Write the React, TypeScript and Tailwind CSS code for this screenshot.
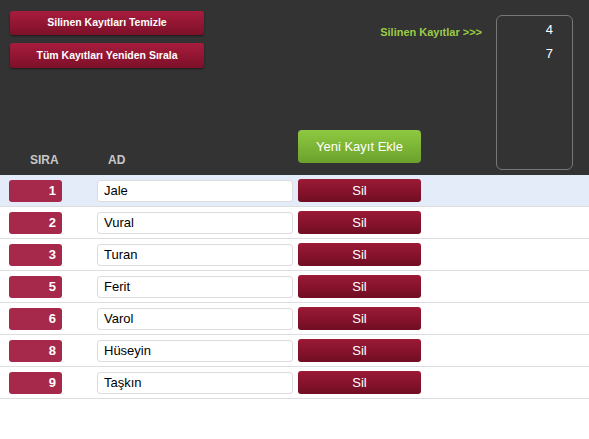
const ROWS = [
  { sira: 1, ad: "Jale" },
  { sira: 2, ad: "Vural" },
  { sira: 3, ad: "Turan" },
  { sira: 5, ad: "Ferit" },
  { sira: 6, ad: "Varol" },
  { sira: 8, ad: "Hüseyin" },
  { sira: 9, ad: "Taşkın" },
];

const DELETED = [4, 7];

export default function App() {
  return (
    <div className="w-[589px] h-[439px] bg-white font-['Liberation_Sans',Arial,sans-serif]">
      {/* ust panel */}
      <div className="h-[175px] bg-[#333333] flex">
        <div className="w-[298px] flex flex-col pt-[11px] pl-[10px]">
          <button className="w-[194px] h-[24px] rounded-[3px] bg-gradient-to-b from-[#a81c3d] to-[#7d1029] text-white text-[10.5px] font-bold shadow-[0_1px_2px_rgba(0,0,0,0.5)]">
            Silinen Kayıtları Temizle
          </button>
          <button className="mt-[8px] w-[194px] h-[25px] rounded-[3px] bg-gradient-to-b from-[#a81c3d] to-[#7d1029] text-white text-[10.5px] font-bold shadow-[0_1px_2px_rgba(0,0,0,0.5)]">
            Tüm Kayıtları Yeniden Sırala
          </button>
          <div className="mt-auto mb-[6px] flex text-[12px] font-bold text-[#c8c8c8]">
            <span className="w-[98px] pl-[20px]">SIRA</span>
            <span>AD</span>
          </div>
        </div>

        <div className="flex pt-[15px]">
          <div className="w-[198px] flex flex-col justify-between">
            <div className="mt-[9px] pr-[14px] text-right text-[11px] font-bold text-[#9ccc45]">
              Silinen Kayıtlar &gt;&gt;&gt;
            </div>
            <button className="mb-[12px] w-[123px] h-[33px] rounded-[4px] bg-gradient-to-b from-[#8fc940] to-[#6ba12c] text-white text-[13px]">
              Yeni Kayıt Ekle
            </button>
          </div>
          <div className="w-[77px] h-[155px] rounded-[6px] border border-[#777777] pt-[2px] pr-[19px] text-right text-[13px] leading-[24px] text-white">
            {DELETED.map((n) => (
              <div key={n}>{n}</div>
            ))}
          </div>
        </div>
      </div>

      {/* kayitlar */}
      {ROWS.map((r, i) => (
        <div
          key={r.sira}
          className={
            "h-[32px] flex items-center border-b border-[#dddddd] " +
            (i === 0 ? "bg-[#e3ecf8]" : "bg-white")
          }
        >
          <div className="ml-[9px] w-[53px] h-[22px] rounded-[3px] bg-[#a6284a] pr-[6px] text-right text-white text-[13px] font-bold leading-[22px]">
            {r.sira}
          </div>
          <input
            readOnly
            value={r.ad}
            className="ml-[35px] w-[196px] h-[22px] rounded-[3px] border border-[#dcdcdc] bg-white pl-[6px] text-[13px] text-black outline-none"
          />
          <button className="ml-[5px] w-[123px] h-[23px] rounded-[3px] bg-gradient-to-b from-[#9c1a35] to-[#700d23] text-white text-[13px]">
            Sil
          </button>
        </div>
      ))}
    </div>
  );
}
